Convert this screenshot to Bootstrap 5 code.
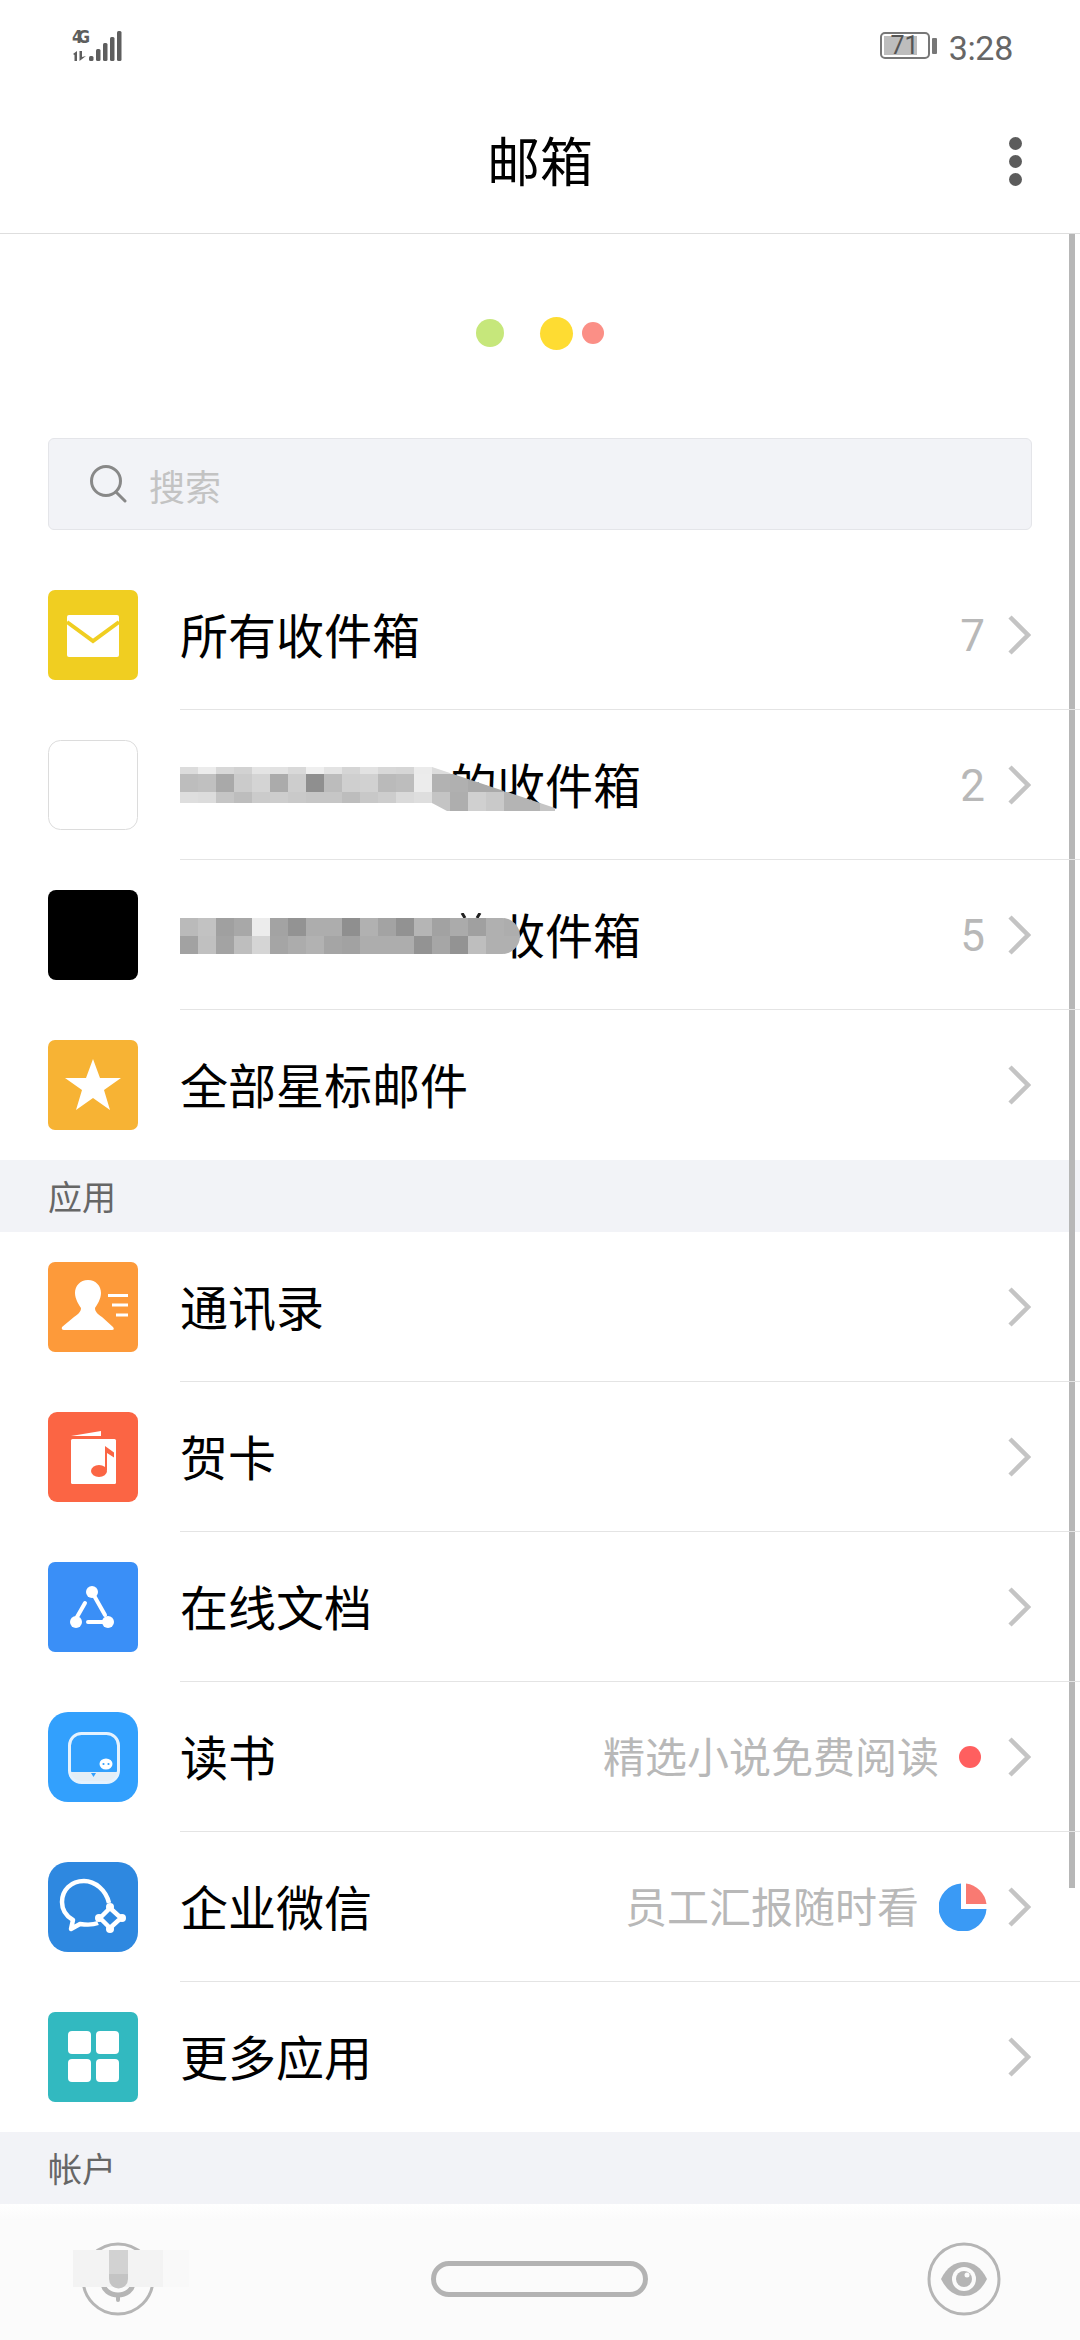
<!DOCTYPE html>
<html lang="zh-CN">
<head>
  <meta charset="UTF-8">
  <meta name="viewport" content="width=device-width, initial-scale=1.0">
  <title>邮箱</title>
  <link href="https://cdn.jsdelivr.net/npm/bootstrap@5.3.0/dist/css/bootstrap.min.css" rel="stylesheet">
  <style>
    html, body { height: 100%; }
    body {
      width: 1080px; height: 2340px; overflow: hidden; background: #fff; color: #000;
      font-family: Roboto, "Noto Sans CJK SC", sans-serif; position: relative;
    }
    /* status bar */
    .status-bar { height: 90px; padding: 24px 67px 0 72px; }
    .status-right { margin-top: 4.5px; }
    .status-time { font-size: 34px; line-height: 30px; color: #666; margin: 4px 0 0 12px; letter-spacing: -.3px; }
    .batt { width: 50px; height: 27px; border: 2px solid #777; border-radius: 5px; padding: 2px; position: relative; }
    .batt-fill { width: 33px; height: 100%; background: #bdbdbd; }
    .batt-num { position: absolute; inset: 0; text-align: center; font-size: 25px; line-height: 23px; color: #555; }
    .batt-nub { width: 5px; height: 16px; margin-left: 2px; background: #777; border-radius: 1px; }
    /* app bar */
    .app-bar { height: 144px; border-bottom: 1px solid #dedede; position: relative; }
    .app-title { font-size: 53px; line-height: 1; padding-top: 6px; }
    .menu-dots { position: absolute; right: 58px; top: 47px; gap: 5px; }
    .menu-dots i { display: block; width: 13px; height: 13px; border-radius: 50%; background: #5c5c5c; }
    /* loading dots */
    .hero { height: 204px; padding-bottom: 6px; }
    .blob { display: block; border-radius: 50%; }
    .blob-green { width: 28px; height: 28px; background: #c6e77b; }
    .blob-yellow { width: 33px; height: 33px; background: #fedc32; margin-left: 36px; }
    .blob-red { width: 22px; height: 22px; background: #fb8f86; margin-left: 9px; }
    /* search */
    .search-box {
      height: 92px; margin: 0 48px 30px; padding-left: 41px; gap: 21px;
      background: #f2f3f7; border: 1px solid #e4e5e9; border-radius: 6px;
      font-size: 36px; color: #c3c3c3;
    }
    .search-text { padding-top: 10px; line-height: 1; }
    /* list */
    .mail-item { height: 150px; padding: 0 0 0 48px; border: 0; border-radius: 0; background: none; }
    .mail-item:first-child, .mail-item:last-child { border-radius: 0; }
    .mail-icon { display: block; flex: none; width: 90px; height: 90px; }
    .mail-body {
      height: 150px; margin-left: 42px; padding-right: 49px; gap: 20px;
      border-bottom: 1px solid #e4e4e4; position: relative;
    }
    .mail-item:last-child .mail-body { border-bottom: 0; }
    .mail-label { font-size: 48px; line-height: 1; color: #000; padding-top: 6px; }
    .gap-one { margin-left: 269px; }
    .gap-two { margin-left: 317px; }
    .mail-hint { font-size: 42px; line-height: 1; color: #b8b8b8; padding-top: 5px; }
    .mail-count { font-size: 44px; line-height: 1; color: #b8b8b8; padding-top: 2px; margin-right: 2px; }
    .mail-dot { width: 22px; height: 22px; border-radius: 50%; background: #ff5f5f; margin-right: 6px; }
    .chev { display: block; flex: none; width: 24px; height: 42px; }
    .mosaic { position: absolute; left: 0; }
    .mosaic-a { top: 57px; }
    .mosaic-b { top: 53px; }
    .section-head {
      height: 72px; padding: 3px 0 0 48px; background: #f2f3f7;
      font-size: 34px; line-height: 1; color: #666;
    }
    /* scrollbar */
    .scroll-thumb { position: absolute; left: 1069px; top: 234px; width: 6px; height: 1654px; background: #b7b7b7; }
    /* system nav */
    .sys-nav { height: 136px; background: linear-gradient(#fff 0, #fbfbfb 16px); }
    .sys-nav svg { display: block; }
    .nav-mic { margin: 35px 0 0 61px; }
    .nav-pill { width: 217px; height: 36px; margin: 57px 0 0 240px; border: 5px solid #b3b3b3; border-radius: 18px; }
    .nav-eye { margin: 35px 76px 0 auto; }
  </style>
</head>
<body>
  <div class="status-bar d-flex justify-content-between">
    <svg width="52" height="38" viewBox="0 0 52 38">
      <text x="0" y="19" font-family="'DejaVu Sans Condensed','DejaVu Sans',sans-serif" font-weight="700" font-size="17" fill="#5e5e5e" textLength="18">4G</text>
      <path d="M1 30l4-3v10H2.500v-6zM7.500 27H10v6l4-1-6.500 5z" fill="#5e5e5e"/>
      <g fill="#5e5e5e">
        <rect x="17" y="32" width="4.500" height="5" rx="1.500"/>
        <rect x="24" y="25" width="4.500" height="12" rx="1.500"/>
        <rect x="31" y="19" width="4.500" height="18" rx="1.500"/>
        <rect x="38" y="13" width="4.500" height="24" rx="1.500"/>
        <rect x="45" y="7" width="4.500" height="30" rx="1.500"/>
      </g>
    </svg>
    <div class="status-right d-flex align-items-center align-self-start">
      <div class="batt"><div class="batt-fill"></div><div class="batt-num">71</div></div>
      <div class="batt-nub"></div>
      <div class="status-time">3:28</div>
    </div>
  </div>

  <div class="app-bar d-flex align-items-center justify-content-center">
    <div class="app-title">邮箱</div>
    <div class="menu-dots d-flex flex-column"><i></i><i></i><i></i></div>
  </div>

  <div class="scroll-thumb"></div>

  <div class="hero d-flex align-items-center justify-content-center">
    <span class="blob blob-green"></span>
    <span class="blob blob-yellow"></span>
    <span class="blob blob-red"></span>
  </div>

  <div class="search-box d-flex align-items-center">
    <svg width="38" height="38" viewBox="0 0 38 38" fill="none" stroke="#888" stroke-width="3">
      <circle cx="16" cy="16" r="14.500"/>
      <path d="M26 27l9 9" stroke-linecap="round"/>
    </svg>
    <span class="search-text">搜索</span>
  </div>

  <div class="list-group list-group-flush">
    <div class="list-group-item mail-item d-flex align-items-center">
      <svg class="mail-icon" viewBox="0 0 90 90">
        <rect width="90" height="90" rx="7" fill="#f0ce21"/>
        <rect x="19" y="25" width="52" height="42" rx="2" fill="#fff"/>
        <path d="M19 32l26 19 26-19" fill="none" stroke="#f0ce21" stroke-width="4"/>
      </svg>
      <div class="mail-body flex-grow-1 d-flex align-items-center">
        <span class="mail-label">所有收件箱</span>
        <span class="mail-count ms-auto">7</span>
        <svg class="chev" viewBox="0 0 24 42"><path d="M3 3l18 18L3 39" fill="none" stroke="#c4c4c4" stroke-width="4.5"/></svg>
      </div>
    </div>
    <div class="list-group-item mail-item d-flex align-items-center">
      <svg class="mail-icon" viewBox="0 0 90 90">
        <rect x=".5" y=".5" width="89" height="89" rx="12" fill="#fff" stroke="#dcdcdc"/>
      </svg>
      <div class="mail-body flex-grow-1 d-flex align-items-center">
        <span class="mail-label gap-one">的收件箱</span>
        <span class="mail-count ms-auto">2</span>
        <svg class="chev" viewBox="0 0 24 42"><path d="M3 3l18 18L3 39" fill="none" stroke="#c4c4c4" stroke-width="4.5"/></svg>
        <svg class="mosaic mosaic-a" id="mosaicA" width="380" height="44" viewBox="0 0 380 44"></svg>
      </div>
    </div>
    <div class="list-group-item mail-item d-flex align-items-center">
      <svg class="mail-icon" viewBox="0 0 90 90">
        <rect width="90" height="90" rx="8" fill="#000"/>
      </svg>
      <div class="mail-body flex-grow-1 d-flex align-items-center">
        <span class="mail-label gap-two">收件箱</span>
        <span class="mail-count ms-auto">5</span>
        <svg class="chev" viewBox="0 0 24 42"><path d="M3 3l18 18L3 39" fill="none" stroke="#c4c4c4" stroke-width="4.5"/></svg>
        <svg class="mosaic mosaic-b" id="mosaicB" width="340" height="44" viewBox="0 0 340 44"></svg>
      </div>
    </div>
    <div class="list-group-item mail-item d-flex align-items-center">
      <svg class="mail-icon" viewBox="0 0 90 90">
        <rect width="90" height="90" rx="7" fill="#f7b334"/>
        <path d="M45 19l7 19h21L56 50l6 20-17-12-17 12 6-20-17-12h21z" fill="#fff"/>
      </svg>
      <div class="mail-body flex-grow-1 d-flex align-items-center">
        <span class="mail-label">全部星标邮件</span>
        <svg class="chev ms-auto" viewBox="0 0 24 42"><path d="M3 3l18 18L3 39" fill="none" stroke="#c4c4c4" stroke-width="4.5"/></svg>
      </div>
    </div>
  </div>

  <div class="section-head d-flex align-items-center">应用</div>

  <div class="list-group list-group-flush">
    <div class="list-group-item mail-item d-flex align-items-center">
      <svg class="mail-icon" viewBox="0 0 90 90">
        <rect width="90" height="90" rx="7" fill="#fd9a3a"/>
        <path d="M40 18C32 18 27 24 27 31c0 6 4 12 6 15 0 4-3 6-7 9L14 65q-1 3 2 3h48q3 0 1-3L54 55c-4-3-7-5-7-9 2-3 6-9 6-15 0-7-5-13-13-13z" fill="#fff"/>
        <path d="M60 33.500h20M64 43h16M68 53h12" stroke="#fff" stroke-width="3"/>
      </svg>
      <div class="mail-body flex-grow-1 d-flex align-items-center">
        <span class="mail-label">通讯录</span>
        <svg class="chev ms-auto" viewBox="0 0 24 42"><path d="M3 3l18 18L3 39" fill="none" stroke="#c4c4c4" stroke-width="4.5"/></svg>
      </div>
    </div>
    <div class="list-group-item mail-item d-flex align-items-center">
      <svg class="mail-icon" viewBox="0 0 90 90">
        <rect width="90" height="90" rx="9" fill="#fb6544"/>
        <path d="M23 24l30-5v5z" fill="#fff"/>
        <rect x="23" y="27" width="45" height="45" rx="1.500" fill="#fff"/>
        <ellipse cx="51" cy="59" rx="8" ry="6" fill="#fb6544"/>
        <path d="M57 58V34l9 6.500v5L59 41v17z" fill="#fb6544"/>
      </svg>
      <div class="mail-body flex-grow-1 d-flex align-items-center">
        <span class="mail-label">贺卡</span>
        <svg class="chev ms-auto" viewBox="0 0 24 42"><path d="M3 3l18 18L3 39" fill="none" stroke="#c4c4c4" stroke-width="4.5"/></svg>
      </div>
    </div>
    <div class="list-group-item mail-item d-flex align-items-center">
      <svg class="mail-icon" viewBox="0 0 90 90">
        <rect width="90" height="90" rx="7" fill="#3a8ff7"/>
        <g fill="#fff"><circle cx="44" cy="30" r="6"/><circle cx="28" cy="60" r="6"/><circle cx="60" cy="60" r="6"/></g>
        <path d="M44 30l13 23M37 41l-8 14M40 60h17" fill="none" stroke="#fff" stroke-width="4" stroke-linecap="round"/>
      </svg>
      <div class="mail-body flex-grow-1 d-flex align-items-center">
        <span class="mail-label">在线文档</span>
        <svg class="chev ms-auto" viewBox="0 0 24 42"><path d="M3 3l18 18L3 39" fill="none" stroke="#c4c4c4" stroke-width="4.5"/></svg>
      </div>
    </div>
    <div class="list-group-item mail-item d-flex align-items-center">
      <svg class="mail-icon" viewBox="0 0 90 90">
        <rect width="90" height="90" rx="20" fill="#32a0fd"/>
        <path d="M21 60h49v-1 1c0 7-5 11-12 11H33c-7 0-12-4-12-11z" fill="#e4eef6"/>
        <rect x="21.500" y="21.500" width="49" height="49" rx="12" fill="none" stroke="#e4f2fe" stroke-width="3"/>
        <path d="M43 61h5l-2.500 4z" fill="#32a0fd"/>
        <ellipse cx="58" cy="52" rx="6.500" ry="5.500" fill="#fff"/>
        <circle cx="55.500" cy="52" r="1.100" fill="#32a0fd"/><circle cx="60.500" cy="52" r="1.100" fill="#32a0fd"/>
      </svg>
      <div class="mail-body flex-grow-1 d-flex align-items-center">
        <span class="mail-label">读书</span>
        <span class="mail-hint ms-auto">精选小说免费阅读</span>
        <span class="mail-dot"></span>
        <svg class="chev" viewBox="0 0 24 42"><path d="M3 3l18 18L3 39" fill="none" stroke="#c4c4c4" stroke-width="4.5"/></svg>
      </div>
    </div>
    <div class="list-group-item mail-item d-flex align-items-center">
      <svg class="mail-icon" viewBox="0 0 90 90">
        <rect width="90" height="90" rx="20" fill="#2e88e0"/>
        <path d="M61 41C58 28 47 19 36 19 23 19 14 28 14 40c0 8 4 14 11 18l-2 9 9-5c7 1 13 1 18-1" fill="none" stroke="#fff" stroke-width="4.500" stroke-linejoin="round"/>
        <path d="M62 46l11 10-11 10-10-10z" fill="#2e88e0" stroke="#fff" stroke-width="4.500" stroke-linejoin="round"/>
        <g fill="#fff"><circle cx="62" cy="45" r="4"/><circle cx="74" cy="56" r="4"/><circle cx="62" cy="67" r="4"/><circle cx="51" cy="56" r="4"/></g>
      </svg>
      <div class="mail-body flex-grow-1 d-flex align-items-center">
        <span class="mail-label">企业微信</span>
        <span class="mail-hint ms-auto">员工汇报随时看</span>
        <svg width="48" height="48" viewBox="0 0 48 48">
          <path d="M22 .500V26h25.500A24 24 0 1 1 22 .500z" fill="#3a9af5"/>
          <path d="M27 .500A24 24 0 0 1 47.500 21H27z" fill="#f97a72"/>
        </svg>
        <svg class="chev" viewBox="0 0 24 42"><path d="M3 3l18 18L3 39" fill="none" stroke="#c4c4c4" stroke-width="4.5"/></svg>
      </div>
    </div>
    <div class="list-group-item mail-item d-flex align-items-center">
      <svg class="mail-icon" viewBox="0 0 90 90">
        <rect width="90" height="90" rx="7" fill="#32b9c0"/>
        <g fill="#fff">
          <rect x="20" y="19" width="23" height="23" rx="4"/><rect x="48" y="19" width="23" height="23" rx="4"/>
          <rect x="20" y="47" width="23" height="23" rx="4"/><rect x="48" y="47" width="23" height="23" rx="4"/>
        </g>
      </svg>
      <div class="mail-body flex-grow-1 d-flex align-items-center">
        <span class="mail-label">更多应用</span>
        <svg class="chev ms-auto" viewBox="0 0 24 42"><path d="M3 3l18 18L3 39" fill="none" stroke="#c4c4c4" stroke-width="4.5"/></svg>
      </div>
    </div>
  </div>

  <div class="section-head d-flex align-items-center">帐户</div>

  <div class="sys-nav d-flex align-items-start">
    <svg class="nav-mic" width="130" height="80" viewBox="0 0 130 80">
      <circle cx="57" cy="40" r="35" fill="none" stroke="#b5b5b5" stroke-width="3"/>
      <path d="M42 44a15 12 0 0 0 30 0" fill="none" stroke="#b5b5b5" stroke-width="5"/>
      <rect x="55" y="55" width="4" height="8" rx="2" fill="#b5b5b5"/>
      <rect x="12" y="11" width="90" height="37" fill="#f3f3f3"/>
      <rect x="102" y="11" width="26" height="37" fill="#f9f9f9"/>
      <rect x="48" y="11" width="19" height="24" fill="#d2d2d2"/>
      <path d="M48 35h19v5a9.500 9.500 0 0 1-19 0z" fill="#c4c4c4"/>
    </svg>
    <div class="nav-pill"></div>
    <svg class="nav-eye" width="80" height="80" viewBox="0 0 80 80">
      <circle cx="40" cy="40" r="35" fill="none" stroke="#b5b5b5" stroke-width="3"/>
      <path d="M17 40C23 28 31 23 40 23s17 5 23 17c-6 12-14 17-23 17s-17-5-23-17z" fill="#b5b5b5"/>
      <circle cx="40" cy="40" r="12" fill="#fbfbfb"/>
      <circle cx="40" cy="40" r="8" fill="#b5b5b5"/>
      <circle cx="43" cy="36" r="2.500" fill="#fbfbfb"/>
    </svg>
  </div>

  <script>
    // mosaic over the hidden account names, colours read from the screenshot
    function cells(svg, colours, y, h) {
      colours.forEach(function (c, i) {
        var r = document.createElementNS('http://www.w3.org/2000/svg', 'rect');
        r.setAttribute('x', i * 18);
        r.setAttribute('y', y);
        r.setAttribute('width', 18.5);
        r.setAttribute('height', h);
        r.setAttribute('fill', c);
        svg.appendChild(r);
      });
    }
    function group(svg, clip) {
      var g = document.createElementNS('http://www.w3.org/2000/svg', 'g');
      g.setAttribute('clip-path', clip);
      svg.appendChild(g);
      return g;
    }

    var a = document.getElementById('mosaicA');
    a.innerHTML = '<defs><clipPath id="clipA"><path d="M0 0H252L375 41V44H267L252 36H0z"/></clipPath></defs>';
    var ag = group(a, 'url(#clipA)');
    cells(ag, ['#dcdcdc','#ececec','#d8d8d8','#d2d2d2','#e4e4e4','#e2e2e2','#d9d9d9','#efefef','#e3e3e3','#d5d5d5','#e2e2e2','#d8d8d8','#d6d6d6','#ebebeb','#dcdcdc'], 0, 7);
    cells(ag, ['#bdbdbd','#c0c0c0','#a9a9a9','#cbcbcb','#d4d4d4','#ababab','#cdcdcd','#8f8f8f','#bcbcbc','#cfcfcf','#d1d1d1','#bababa','#bdbdbd','#ececec','#b2b2b2','#b0b0b0','#aaaaaa','#aaaaaa'], 7, 18);
    cells(ag, ['#dedede','#dcdcdc','#c5c5c5','#bdbdbd','#cbcbcb','#cdcdcd','#c9c9c9','#c6c6c6','#c6c6c6','#bdbdbd','#c8c8c8','#cdcdcd','#dadada','#dedede','#c4c4c4','#aeaeae','#d0d0d0','#c9c9c9','#b4b4b4','#b4b4b4','#c5c5c5'], 25, 19);

    var b = document.getElementById('mosaicB');
    b.innerHTML = '<defs><clipPath id="clipB"><path d="M0 5H322a18 18 0 0 1 0 36H0z"/></clipPath></defs>' +
      '<path d="M282 0l3 5M300 0l-3 5" stroke="#222" stroke-width="3"/>';
    var bg = group(b, 'url(#clipB)');
    cells(bg, ['#bababa','#c2c2c2','#a0a0a0','#a8a8a8','#ececec','#a3a3a3','#939393','#adadad','#adadad','#8f8f8f','#b1b1b1','#a3a3a3','#929292','#b5b5b5','#a2a2a2','#ababab','#a0a0a0','#b0b0b0','#adadad'], 5, 18);
    cells(bg, ['#a2a2a2','#c0c0c0','#a3a3a3','#bebebe','#d5d5d5','#a5a5a5','#acacac','#b2b2b2','#a5a5a5','#a2a2a2','#adadad','#adadad','#adadad','#939393','#a6a6a6','#939393','#bebebe','#b0b0b0','#b0b0b0'], 23, 18);
  </script>
  <script src="https://cdn.jsdelivr.net/npm/bootstrap@5.3.0/dist/js/bootstrap.bundle.min.js"></script>
</body>
</html>
